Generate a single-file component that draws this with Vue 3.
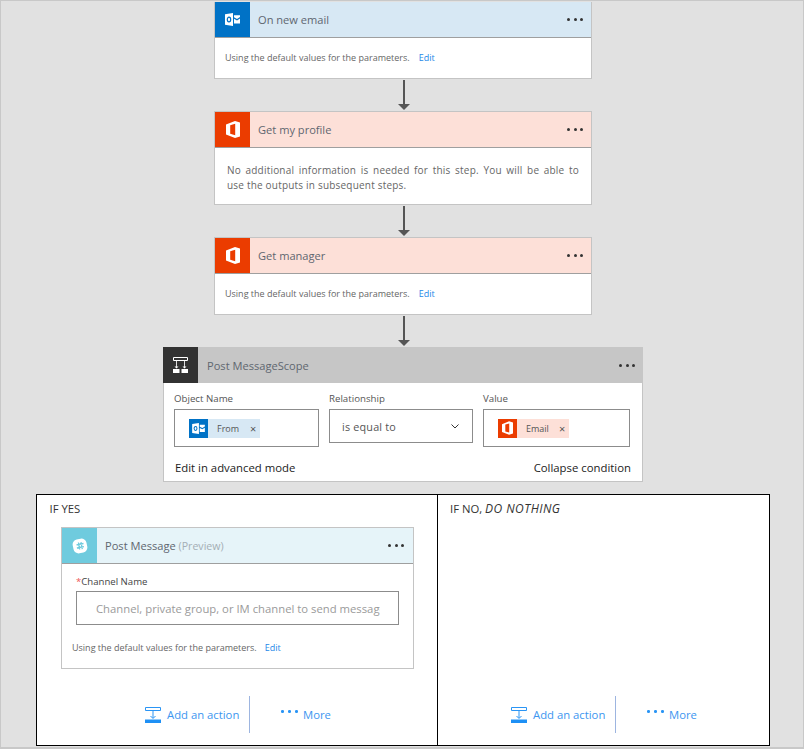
<script setup>
const more = 'More'
</script>

<template>
  <div class="page">
    <div class="card step first">
      <div class="head blue">
        <div class="ico bg-blue"><svg viewBox="0 0 15 13" width="15" height="13"><path fill="#fff" d="M0 1.300 8 0v13l-8-1.300z"/><path fill="#fff" d="M9 2.200h6v1.900L12 6 9 4.300zM9 5.800l3 1.700 3-1.900V10.500H9z"/><ellipse cx="4" cy="6.500" rx="1.700" ry="2.300" fill="none" stroke="#0072c6" stroke-width="1.200"/></svg></div>
        <span class="title">On new email</span>
        <span class="dots"><i></i><i></i><i></i></span>
      </div>
      <div class="body small"><span>Using the default values for the parameters.</span><a>Edit</a></div>
    </div>
    <div class="arrow"><b></b><u></u></div>
    <div class="card step">
      <div class="head red">
        <div class="ico bg-red"><svg viewBox="0 0 14 17" width="14" height="17"><path fill="#fff" fill-rule="evenodd" d="M9 0 14 1.600V15.400L9 17 0 13.600V3.600ZM9.200 2.800 4.200 4.200V12.800L9.200 14.200Z"/></svg></div>
        <span class="title">Get my profile</span>
        <span class="dots"><i></i><i></i><i></i></span>
      </div>
      <div class="body info"><span class="line1">No additional information is needed for this step. You will be able to</span><span>use the outputs in subsequent steps.</span></div>
    </div>
    <div class="arrow"><b></b><u></u></div>
    <div class="card step">
      <div class="head red">
        <div class="ico bg-red"><svg viewBox="0 0 14 17" width="14" height="17"><path fill="#fff" fill-rule="evenodd" d="M9 0 14 1.600V15.400L9 17 0 13.600V3.600ZM9.200 2.800 4.200 4.200V12.800L9.200 14.200Z"/></svg></div>
        <span class="title">Get manager</span>
        <span class="dots"><i></i><i></i><i></i></span>
      </div>
      <div class="body small"><span>Using the default values for the parameters.</span><a>Edit</a></div>
    </div>
    <div class="arrow"><b></b><u></u></div>
    <div class="card scope">
      <div class="head grey">
        <div class="ico bg-dark"><svg viewBox="0 0 15 16" width="15" height="16"><path fill="none" stroke="#fff" d="M.5.500h14v3H.500z"/><path fill="none" stroke="#ddd" d="M3.500 4v7M11.500 4v7"/><path fill="#fff" d="M1.500 9.500h4l-2 2zM9.500 9.500h4l-2 2zM0 12h6.500v4H0zM8.500 12H15v4H8.500z"/></svg></div>
        <span class="title">Post MessageScope</span>
        <span class="dots"><i></i><i></i><i></i></span>
      </div>
      <div class="cond">
        <div class="fields">
          <div class="field f1">
            <label>Object Name</label>
            <div class="box tall">
              <span class="chip chip-blue"><span class="chip-ico bg-blue"><svg viewBox="0 0 15 13" width="13" height="11"><path fill="#fff" d="M0 1.300 8 0v13l-8-1.300z"/><path fill="#fff" d="M9 2.200h6v1.900L12 6 9 4.300zM9 5.800l3 1.700 3-1.900V10.500H9z"/><ellipse cx="4" cy="6.500" rx="1.700" ry="2.300" fill="none" stroke="#0072c6" stroke-width="1.200"/></svg></span><span class="chip-text">From</span><span class="x">×</span></span>
            </div>
          </div>
          <div class="field f2">
            <label>Relationship</label>
            <div class="box select"><span>is equal to</span><svg viewBox="0 0 8 5" width="8" height="5"><path d="M.5.500 4 4 7.500.500" fill="none" stroke="#333" stroke-width="1"/></svg></div>
          </div>
          <div class="field f3">
            <label>Value</label>
            <div class="box tall">
              <span class="chip chip-red"><span class="chip-ico bg-red"><svg viewBox="0 0 14 17" width="11" height="14"><path fill="#fff" fill-rule="evenodd" d="M9 0 14 1.600V15.400L9 17 0 13.600V3.600ZM9.200 2.800 4.200 4.200V12.800L9.200 14.200Z"/></svg></span><span class="chip-text">Email</span><span class="x">×</span></span>
            </div>
          </div>
        </div>
        <div class="links"><span>Edit in advanced mode</span><span>Collapse condition</span></div>
      </div>
    </div>
    <div class="branches">
      <div class="branch yes">
        <div class="branch-title">IF YES</div>
        <div class="card nested">
          <div class="head cyan">
            <div class="ico bg-cyan"><svg viewBox="0 0 16 16" width="16" height="16"><rect x="1" y="1" width="14" height="14" rx="5" fill="#fff" transform="rotate(-12 8 8)"/><path d="M6.400 4.500l1.300 7M9 4.200l1.300 7M4.500 6.800l7-1.300M4.900 10l7-1.300" stroke="#6fcbde" stroke-width="1.300" fill="none"/></svg></div>
            <span class="title">Post Message <em>(Preview)</em></span>
            <span class="dots"><i></i><i></i><i></i></span>
          </div>
          <div class="nested-body">
            <label class="chan"><span class="req">*</span>Channel Name</label>
            <div class="input"><span>Channel, private group, or IM channel to send message to</span></div>
            <div class="small-row"><span>Using the default values for the parameters.</span><a>Edit</a></div>
          </div>
        </div>
        <div class="actions">
          <a class="add"><svg viewBox="0 0 16 16" width="16" height="16"><path d="M.5.500h15v3H.500z" fill="none" stroke="#2a95f5"/><path d="M8 4v7M5.500 9 8 11.500 10.500 9" fill="none" stroke="#2a95f5"/><path d="M0 12.500h16V16H0z" fill="#1e90f5"/></svg>Add an action</a>
          <span class="sep"></span>
          <a class="more"><span class="mdots"><i></i><i></i><i></i></span>{{ more }}</a>
        </div>
      </div>
      <div class="branch no">
        <div class="branch-title">IF NO, <em>DO NOTHING</em></div>
        <div class="actions">
          <a class="add"><svg viewBox="0 0 16 16" width="16" height="16"><path d="M.5.500h15v3H.500z" fill="none" stroke="#2a95f5"/><path d="M8 4v7M5.500 9 8 11.500 10.500 9" fill="none" stroke="#2a95f5"/><path d="M0 12.500h16V16H0z" fill="#1e90f5"/></svg>Add an action</a>
          <span class="sep"></span>
          <a class="more"><span class="mdots"><i></i><i></i><i></i></span>{{ more }}</a>
        </div>
      </div>
    </div>
  </div>
</template>

<style>
html, body { margin: 0; background: #e1e1e1; }
</style>

<style scoped>
.page {
  width: 804px;
  height: 749px;
  box-sizing: border-box;
  background: #e1e1e1;
  border: 1px solid #c8c8c8;
  border-bottom-width: 2px;
  padding-top: 1px;
  display: flex;
  flex-direction: column;
  align-items: center;
  font-family: "Open Sans", "Liberation Sans", sans-serif;
  color: #444;
  overflow: hidden;
}
.card {
  box-sizing: border-box;
  background: #fff;
  border: 1px solid #c4c4c4;
  flex: none;
}
.step { width: 378px; margin-left: 2px; }
.first { border-top: none; }
.scope { width: 480px; margin-left: 2px; border-top: none; }
.head {
  display: flex;
  align-items: center;
  height: 36px;
  border-bottom: 1px solid #9f9f9f;
  box-sizing: border-box;
}
.blue { background: #d7e8f4; }
.red { background: #fde0d8; }
.grey { background: #c6c6c6; border-bottom: none; margin: 0 -1px; }
.cyan { background: #e6f4f9; }
.ico {
  width: 35px;
  align-self: stretch;
  display: flex;
  align-items: center;
  justify-content: center;
  flex: none;
}
.bg-blue { background: #0072c6; }
.bg-red { background: #eb3c00; }
.bg-dark { background: #323232; }
.bg-cyan { background: #6fcbde; }
.title {
  margin-left: 8px;
  font-size: 11.1px;
  color: #5f6670;
  flex: 1;
}
.grey .title { margin-left: 9px; }
.title em { font-style: normal; color: #a4aeb5; font-size: 10.6px; }
.dots { display: flex; gap: 3.5px; margin-right: 8px; }
.nested .dots { margin-right: 9px; }
.dots i { width: 3px; height: 3px; border-radius: 50%; background: #333; display: block; }
.body.small {
  height: 40px;
  box-sizing: border-box;
  display: flex;
  align-items: center;
  font-size: 9px;
  color: #666;
  padding: 0 0 1px 10px;
  gap: 9px;
}
a { color: #2488e8; }
.info {
  box-sizing: border-box;
  height: 56px;
  padding: 15px 12px 0;
  font-size: 10px;
  line-height: 15px;
  letter-spacing: .2px;
  color: #666;
}
.info span { display: block; }
.info .line1 { text-align: justify; text-align-last: justify; }
.arrow {
  height: 32px;
  width: 12px;
  margin-left: 4px;
  flex: none;
  display: flex;
  flex-direction: column;
  align-items: center;
}
.arrow b { width: 2px; height: 24px; background: #555; margin-top: 1px; display: block; }
.arrow u { width: 0; height: 0; border-left: 6px solid transparent; border-right: 6px solid transparent; border-top: 6px solid #555; display: block; }
.cond { padding: 9px 11px 0 10px; height: 98px; box-sizing: border-box; }
.fields { display: flex; }
.field label { display: block; font-size: 9.7px; color: #555; line-height: 14px; margin-bottom: 3px; }
.f1 { width: 155px; }
.f2 { width: 154px; }
.f3 { width: 147px; }
.f1 .box { width: 145px; }
.f2 .box { width: 144px; }
.f3 .box { width: 147px; }
.box { box-sizing: border-box; border: 1px solid #8c8c8c; height: 38px; display: flex; align-items: center; }
.tall { padding: 0 0 0 14px; }
.select { height: 34px; padding: 0 13px 0 12px; font-size: 10.8px; color: #555; justify-content: space-between; letter-spacing: .2px; }
.chip { display: flex; align-items: center; height: 19px; font-size: 9px; color: #555; }
.chip-blue { background: #d7e8f4; }
.chip-red { background: #fde0d8; }
.chip-ico { width: 19px; height: 19px; display: flex; align-items: center; justify-content: center; }
.chip-text { margin-left: 9px; }
.x { margin: 0 4px 0 11px; font-size: 11px; }
.chip-red .x { margin-left: 10px; }
.links { display: flex; justify-content: space-between; font-size: 11.35px; color: #222; margin-top: 13px; padding-left: 1px; }
.branches {
  margin-top: 12px;
  margin-left: 2px;
  display: flex;
  flex: none;
  width: 734px;
  height: 252px;
  box-sizing: border-box;
  border: 1px solid #000;
  background: #fff;
}
.branch { box-sizing: border-box; display: flex; flex-direction: column; }
.yes { flex: none; width: 401px; border-right: 1px solid #000; }
.no { flex: 1; min-width: 0; }
.branch-title { font-size: 11.3px; color: #333; padding: 7px 0 0 12.500px; line-height: 14px; margin-bottom: 11px; }
.no .branch-title { padding-left: 12px; }
.branch-title em { font-style: italic; font-size: 12px; letter-spacing: .45px; }
.nested { margin-left: 24px; width: 353px; height: 142px; }
.nested-body { padding: 11px 14px 0 14px; }
.chan { display: block; font-size: 9.6px; color: #444; line-height: 14px; }
.req { color: #e55; }
.input { box-sizing: border-box; border: 1px solid #8c8c8c; height: 34px; margin-top: 2px; padding: 0 18px 0 19px; display: flex; align-items: center; font-size: 11.3px; color: #9a9a9a; overflow: hidden; }
.input span { white-space: nowrap; overflow: hidden; display: block; }
.small-row { display: flex; align-items: center; gap: 8px; font-size: 9px; color: #666; margin-top: 16px; margin-left: -4px; }
.actions { display: flex; align-items: center; margin-top: auto; margin-bottom: 12px; height: 37px; padding-left: 108px; font-size: 11.3px; }
.no .actions { padding-left: 73px; }
.add { display: flex; align-items: center; gap: 6px; color: #3d96f0; width: 104px; }
.sep { width: 1px; height: 37px; background: #9db5e0; }
.more { display: flex; align-items: center; gap: 5.5px; color: #3d96f0; margin-left: 31px; }
.mdots { display: flex; gap: 4.500px; margin-top: -6px; }
.mdots i { display: block; width: 2.5px; height: 2.5px; background: #2a95f5; border-radius: 50%; }
</style>
